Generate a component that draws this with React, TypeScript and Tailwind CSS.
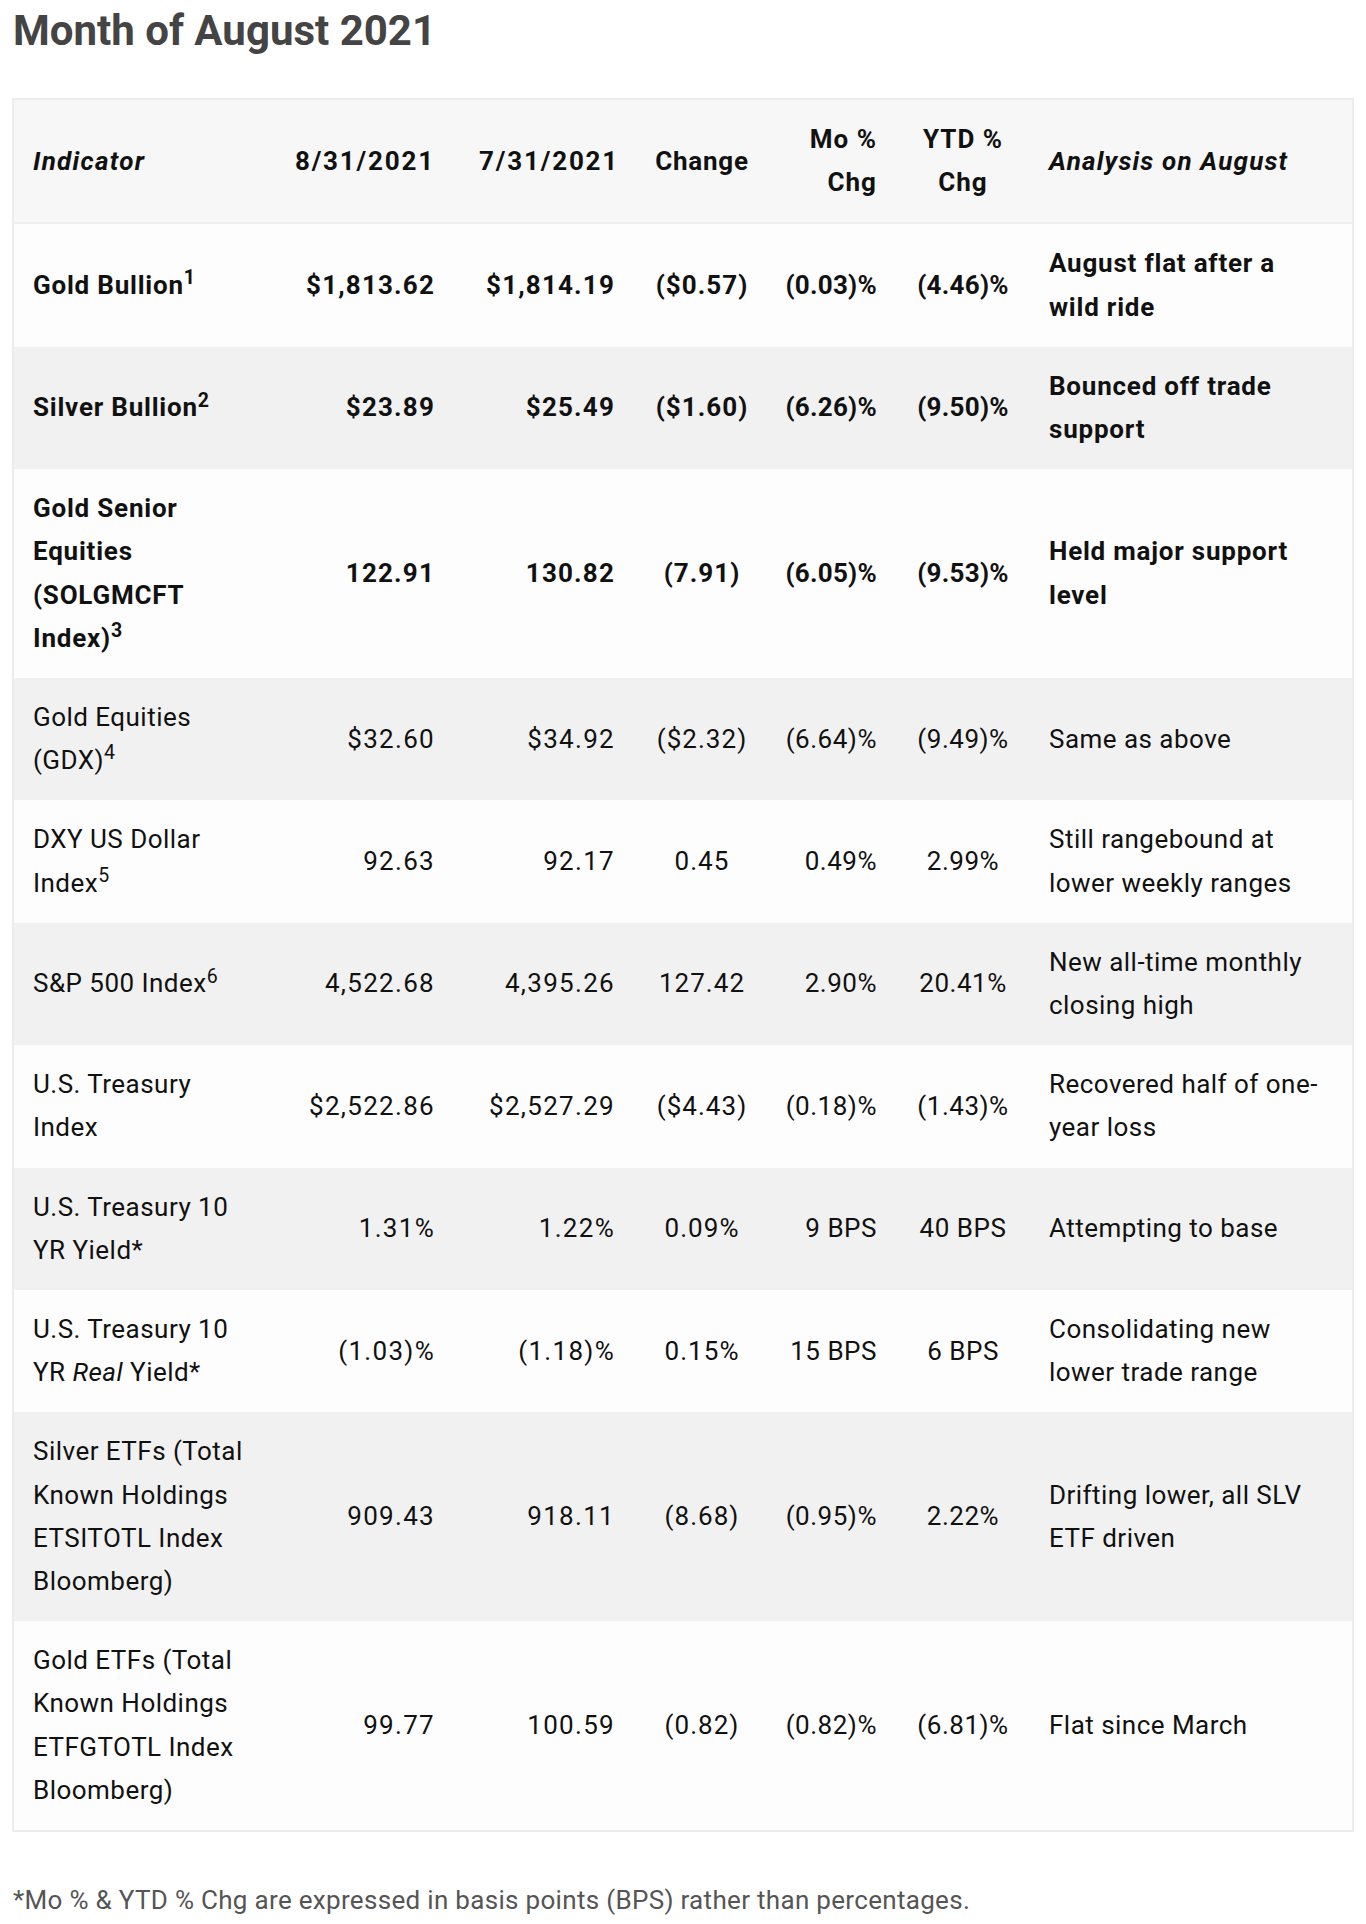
import React from "react";

type Row = {
  name: React.ReactNode;
  v1: string;
  v2: string;
  chg: string;
  mo: string;
  ytd: string;
  note: React.ReactNode;
  bold?: boolean;
};

const rows: Row[] = [
  {
    name: <>Gold Bullion<sup>1</sup></>,
    v1: "$1,813.62", v2: "$1,814.19", chg: "($0.57)", mo: "(0.03)%", ytd: "(4.46)%",
    note: <>August flat after a<br />wild ride</>,
    bold: true,
  },
  {
    name: <>Silver Bullion<sup>2</sup></>,
    v1: "$23.89", v2: "$25.49", chg: "($1.60)", mo: "(6.26)%", ytd: "(9.50)%",
    note: <>Bounced off trade<br />support</>,
    bold: true,
  },
  {
    name: <>Gold Senior<br />Equities<br />(SOLGMCFT<br />Index)<sup>3</sup></>,
    v1: "122.91", v2: "130.82", chg: "(7.91)", mo: "(6.05)%", ytd: "(9.53)%",
    note: <>Held major support<br />level</>,
    bold: true,
  },
  {
    name: <>Gold Equities<br />(GDX)<sup>4</sup></>,
    v1: "$32.60", v2: "$34.92", chg: "($2.32)", mo: "(6.64)%", ytd: "(9.49)%",
    note: <>Same as above</>,
  },
  {
    name: <>DXY US Dollar<br />Index<sup>5</sup></>,
    v1: "92.63", v2: "92.17", chg: "0.45", mo: "0.49%", ytd: "2.99%",
    note: <>Still rangebound at<br />lower weekly ranges</>,
  },
  {
    name: <>S&amp;P 500 Index<sup>6</sup></>,
    v1: "4,522.68", v2: "4,395.26", chg: "127.42", mo: "2.90%", ytd: "20.41%",
    note: <>New all-time monthly<br />closing high</>,
  },
  {
    name: <>U.S. Treasury<br />Index</>,
    v1: "$2,522.86", v2: "$2,527.29", chg: "($4.43)", mo: "(0.18)%", ytd: "(1.43)%",
    note: <>Recovered half of one-<br />year loss</>,
  },
  {
    name: <>U.S. Treasury 10<br />YR Yield*</>,
    v1: "1.31%", v2: "1.22%", chg: "0.09%", mo: "9 BPS", ytd: "40 BPS",
    note: <>Attempting to base</>,
  },
  {
    name: <>U.S. Treasury 10<br />YR <em>Real</em> Yield*</>,
    v1: "(1.03)%", v2: "(1.18)%", chg: "0.15%", mo: "15 BPS", ytd: "6 BPS",
    note: <>Consolidating new<br />lower trade range</>,
  },
  {
    name: <>Silver ETFs (Total<br />Known Holdings<br />ETSITOTL Index<br />Bloomberg)</>,
    v1: "909.43", v2: "918.11", chg: "(8.68)", mo: "(0.95)%", ytd: "2.22%",
    note: <>Drifting lower, all SLV<br />ETF driven</>,
  },
  {
    name: <>Gold ETFs (Total<br />Known Holdings<br />ETFGTOTL Index<br />Bloomberg)</>,
    v1: "99.77", v2: "100.59", chg: "(0.82)", mo: "(0.82)%", ytd: "(6.81)%",
    note: <>Flat since March</>,
  },
];

// shared cell box; horizontal padding set per column
const cell = "py-[18px] align-middle whitespace-nowrap";

export default function App() {
  return (
    <div
      className="min-h-screen bg-white px-[12px] pt-[6px] text-[#111]"
      style={{ fontFamily: "Roboto, 'Noto Sans', sans-serif" }}
    >
      <h1 className="text-[42px] font-bold leading-[50px] text-[#444] pl-[1px]">
        Month of August 2021
      </h1>

      <table className="mt-[42px] w-[1340px] table-fixed border-collapse border-2 border-[#ececec] text-[26px] leading-[43.2px]">
        <colgroup>
          <col className="w-[254px]" />
          <col className="w-[190px]" />
          <col className="w-[180px]" />
          <col className="w-[130px]" />
          <col className="w-[132px]" />
          <col className="w-[128px]" />
          <col className="w-[326px]" />
        </colgroup>
        <thead>
          <tr className="bg-[#f7f7f7] font-bold border-b-2 border-[#efefef]">
            <th className={`${cell} pl-[19px] pr-[22px] text-left italic tracking-[0.05em]`}>Indicator</th>
            <th className={`${cell} px-[22px] text-right tracking-[0.07em]`}>8/31/2021</th>
            <th className={`${cell} px-[22px] text-right tracking-[0.07em]`}>7/31/2021</th>
            <th className={`${cell} px-[12px] text-center tracking-[0.03em]`}>Change</th>
            <th className={`${cell} pl-[8px] pr-[22px] text-right tracking-[0.04em]`}>Mo %<br />Chg</th>
            <th className={`${cell} px-[10px] text-center tracking-[0.04em]`}>YTD %<br />Chg</th>
            <th className={`${cell} px-[22px] text-left italic tracking-[0.045em]`}>Analysis on August</th>
          </tr>
        </thead>
        <tbody>
          {rows.map((r, i) => {
            const text = r.bold ? "tracking-[0.03em]" : "tracking-[0.018em]";
            const num = r.bold ? "tracking-[0.045em]" : "tracking-[0.05em]";
            const chg = r.bold ? "tracking-[0.04em]" : "tracking-[0.04em]";
            const pct = r.bold ? "tracking-[0.01em]" : "tracking-[0.02em]";
            return (
              <tr
                key={i}
                className={`${i % 2 === 0 ? "bg-[#fdfdfd]" : "bg-[#f1f1f1]"} ${r.bold ? "font-bold" : "font-normal"}`}
              >
                <td className={`${cell} pl-[19px] pr-[22px] text-left ${text}`}>{r.name}</td>
                <td className={`${cell} px-[22px] text-right ${num}`}>{r.v1}</td>
                <td className={`${cell} px-[22px] text-right ${num}`}>{r.v2}</td>
                <td className={`${cell} px-[12px] text-center ${chg}`}>{r.chg}</td>
                <td className={`${cell} pl-[8px] pr-[22px] text-right ${pct}`}>{r.mo}</td>
                <td className={`${cell} px-[10px] text-center ${pct}`}>{r.ytd}</td>
                <td className={`${cell} px-[22px] text-left ${text}`}>{r.note}</td>
              </tr>
            );
          })}
        </tbody>
      </table>

      <p className="mt-[47px] pl-[1px] text-[26px] font-normal leading-[43px] tracking-[0.012em] text-[#555]">
        *Mo % &amp; YTD % Chg are expressed in basis points (BPS) rather than percentages.
      </p>
    </div>
  );
}
